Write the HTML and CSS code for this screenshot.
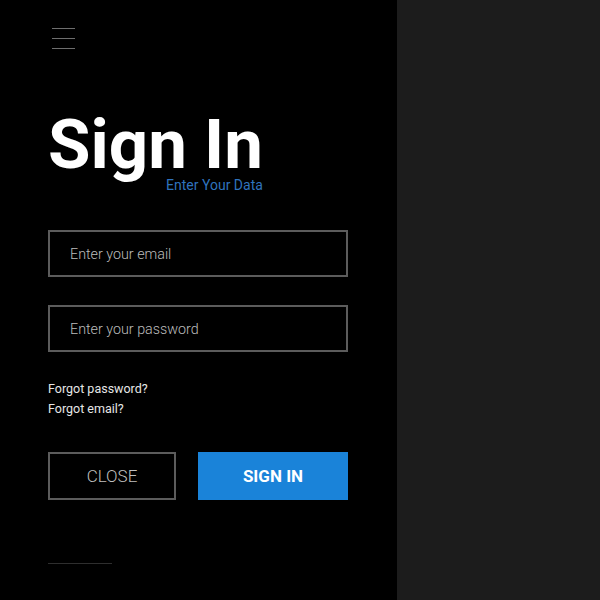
FILE: index.html
```html
<!DOCTYPE html>
<html lang="en">

<head>
    <meta charset="UTF-8">
    <meta name="viewport" content="width=device-width, initial-scale=1.0">
    <title>Sign In</title>
    <link rel="stylesheet" href="styles.css">
</head>

<body class="page">
    <main class="login">
        <!-- Menu -->
        <div class="login__menu">
            <span class="menu__line"></span>
            <span class="menu__line"></span>
            <span class="menu__line"></span>
        </div>

        <header class="login__header">
            <h1 class="header__title">Sign In</h1>
            <p class="header__sub">Enter Your Data</p>
        </header>

        <form class="login__form">
            <input class="field" type="email" placeholder="Enter your email">
            <input class="field field--second" type="password" placeholder="Enter your password">

            <div class="login__links">
                <a class="link" href="#">Forgot password?</a>
                <a class="link" href="#">Forgot email?</a>
            </div>

            <div class="login__btns">
                <button class="btn btn--close" type="button">CLOSE</button>
                <button class="btn btn--sign" type="submit">SIGN IN</button>
            </div>
        </form>

        <div class="login__rule"></div>
    </main>

    <aside class="side"></aside>
</body>

</html>
```

FILE: styles.css
```css
* {
    padding: 0;
    margin: 0;
    box-sizing: border-box;
}

.page {
    display: flex;
    width: 600px;
    height: 600px;
    background-color: #1c1c1c;
    font-family: Roboto, "Liberation Sans", sans-serif;
    overflow: hidden;
}

/* Panel izquierdo */
.login {
    display: flex;
    flex-direction: column;
    width: 397px;
    height: 600px;
    padding: 28px 0 0 48px;
    background-color: #000;
}

.login__menu {
    display: flex;
    flex-direction: column;
    gap: 9px;
    width: 23px;
    margin-left: 4px;
}

.menu__line {
    display: block;
    height: 1px;
    background-color: #6e6e6e;
}

/* Titulo */
.login__header {
    display: flex;
    flex-direction: column;
    align-items: flex-end;
    align-self: flex-start;
    margin-top: 65px;
}

.header__title {
    font-size: 69px;
    font-weight: 700;
    line-height: 62px;
    color: #fff;
}

.header__sub {
    margin-top: 2px;
    font-size: 14px;
    font-weight: 400;
    line-height: 1;
    color: #2f73bd;
}

/* Formulario */
.login__form {
    display: flex;
    flex-direction: column;
    margin-top: 38px;
}

.field {
    width: 300px;
    height: 47px;
    padding-left: 20px;
    border: 2px solid #5c5c5c;
    background-color: #000;
    color: #ddd;
    font-family: Roboto, "Liberation Sans", sans-serif;
    font-size: 14.3px;
    font-weight: 300;
    outline: none;
}

.field::placeholder {
    color: #bcbcbc;
}

.field--second {
    margin-top: 28px;
}

.login__links {
    display: flex;
    flex-direction: column;
    margin-top: 27px;
}

.link {
    font-size: 12.5px;
    line-height: 20px;
    color: #e6e6e6;
    text-decoration: none;
}

/* Botones */
.login__btns {
    display: flex;
    gap: 22px;
    margin-top: 33px;
}

.btn {
    height: 48px;
    font-family: Roboto, "Liberation Sans", sans-serif;
    font-size: 17px;
    cursor: pointer;
}

.btn--close {
    width: 128px;
    border: 2px solid #5c5c5c;
    background-color: #000;
    color: #bfbfbf;
    font-weight: 300;
}

.btn--sign {
    width: 150px;
    border: none;
    background-color: #1a83d9;
    color: #fff;
    font-weight: 700;
}

.login__rule {
    width: 64px;
    height: 1px;
    margin-top: 63px;
    background-color: #2e2e2e;
}

/* Panel derecho */
.side {
    flex: 1;
    height: 600px;
    background-color: #1c1c1c;
}
```
